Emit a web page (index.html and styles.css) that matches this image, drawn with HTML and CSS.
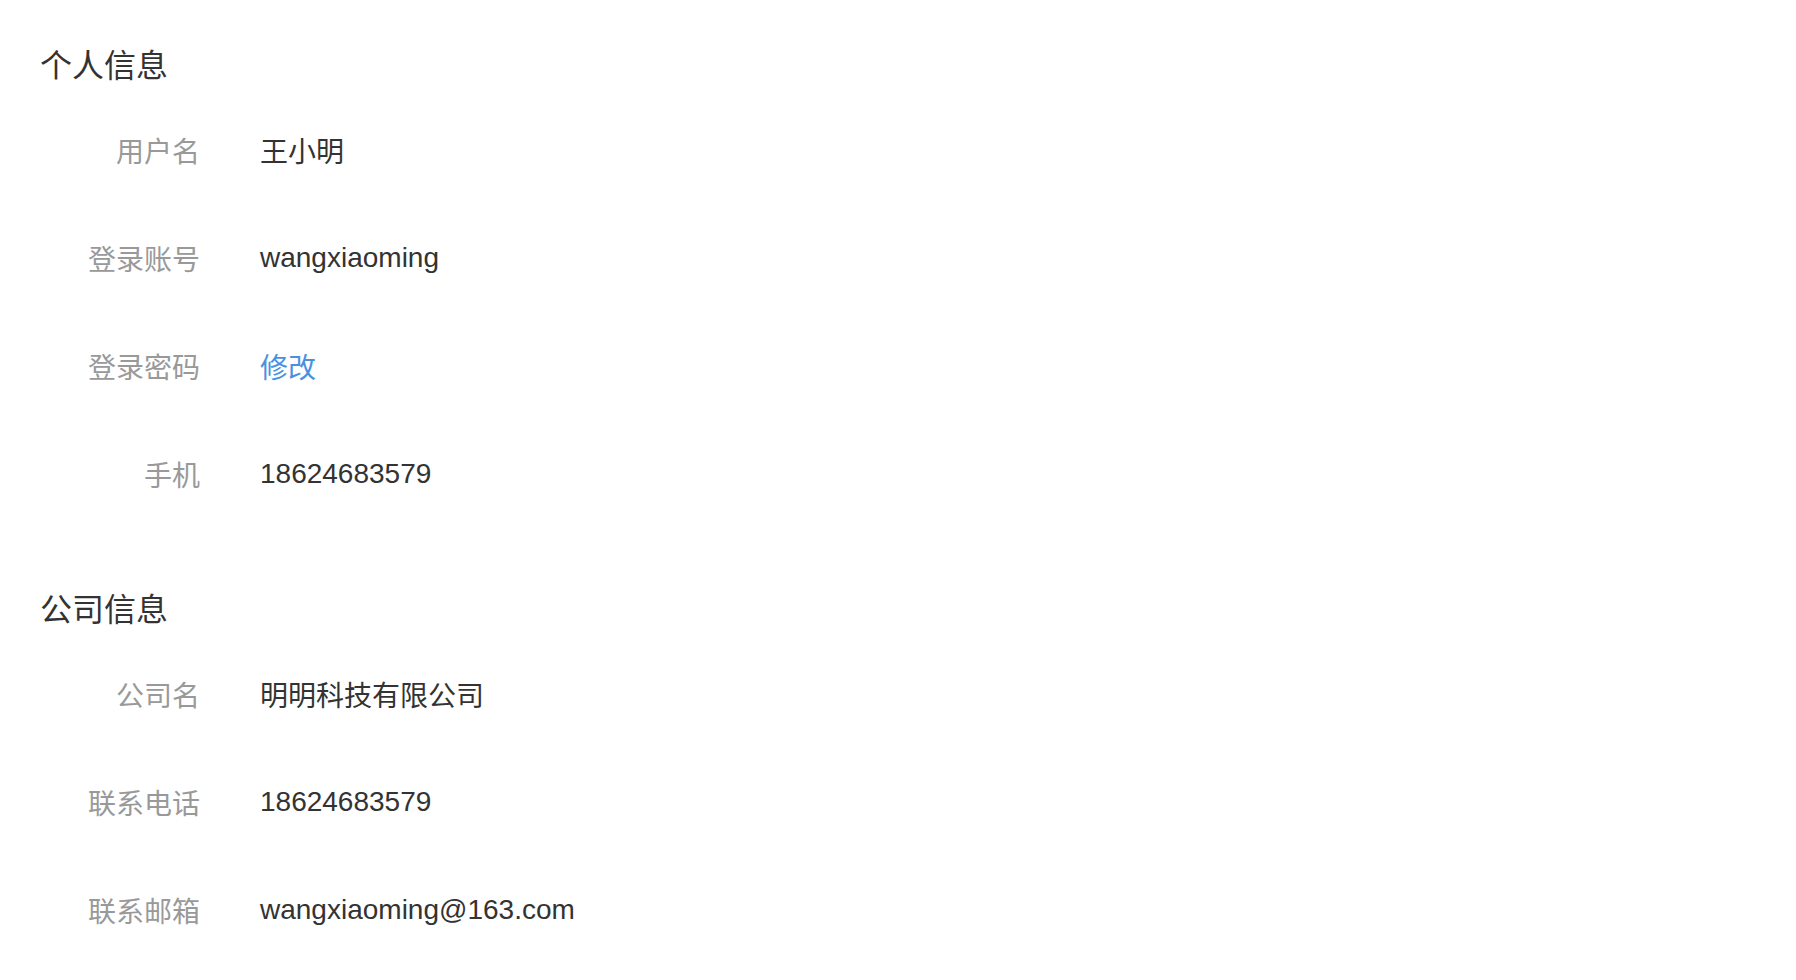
FILE: index.html
```html
<!DOCTYPE html>
<html lang="zh-CN">
<head>
<meta charset="utf-8">
<title>个人信息</title>
<link rel="stylesheet" href="styles.css">
</head>
<body>
<div class="page">
  <section class="section">
    <h2 class="section-title">个人信息</h2>
    <div class="row"><span class="label">用户名</span><span class="value">王小明</span></div>
    <div class="row"><span class="label">登录账号</span><span class="value">wangxiaoming</span></div>
    <div class="row"><span class="label">登录密码</span><a class="value link" href="#">修改</a></div>
    <div class="row"><span class="label">手机</span><span class="value">18624683579</span></div>
  </section>
  <section class="section">
    <h2 class="section-title">公司信息</h2>
    <div class="row"><span class="label">公司名</span><span class="value">明明科技有限公司</span></div>
    <div class="row"><span class="label">联系电话</span><span class="value">18624683579</span></div>
    <div class="row"><span class="label">联系邮箱</span><span class="value">wangxiaoming@163.com</span></div>
  </section>
</div>
</body>
</html>
```
FILE: styles.css
```css
html, body {
  margin: 0;
  padding: 0;
  background: #ffffff;
}
body {
  font-family: "Liberation Sans", "Noto Sans CJK SC", sans-serif;
  color: #333333;
}
.page {
  padding: 42px 40px 40px;
}
.section + .section {
  margin-top: 58px;
}
.section-title {
  margin: 0 0 6px 0;
  font-size: 32px;
  font-weight: normal;
  line-height: 48px;
  color: #333333;
}
.row {
  display: flex;
  align-items: center;
  height: 108px;
  font-size: 28px;
}
.label {
  width: 160px;
  text-align: right;
  color: #999999;
}
.value {
  margin-left: 60px;
  color: #333333;
}
.link {
  color: #4a90e2;
  text-decoration: none;
}
```
